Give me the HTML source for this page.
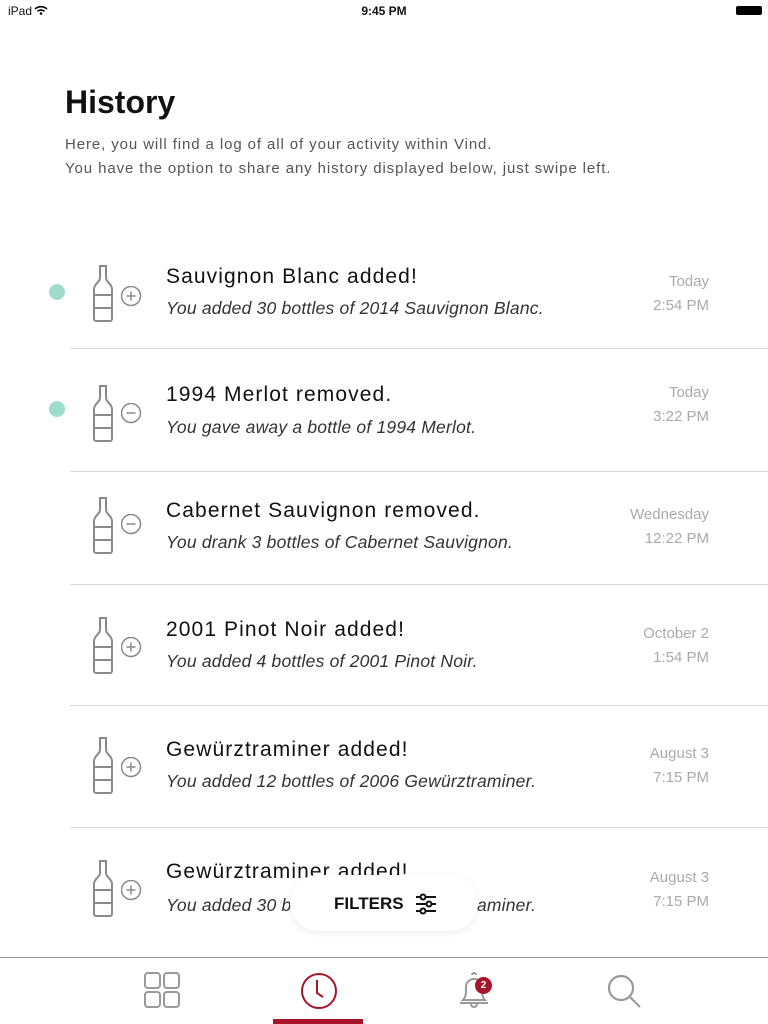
<!DOCTYPE html>
<html><head><meta charset="utf-8"><style>
*{margin:0;padding:0;box-sizing:border-box}
body{width:768px;height:1024px;position:relative;background:#fff;font-family:"Liberation Sans",sans-serif;overflow:hidden;color:#111}
.a{position:absolute;white-space:nowrap}
.t{font-size:21px;letter-spacing:1.1px;color:#111;left:166px}
.s{font-size:17.5px;letter-spacing:0.2px;font-style:italic;color:#333;left:166px}
.d{font-size:15px;color:#aaa;right:59px;text-align:right}
.sep{position:absolute;left:70px;right:0;height:1px;background:#d6d6d6}
.dot{position:absolute;left:49px;width:16px;height:16px;border-radius:50%;background:#9fdccb}
</style></head><body>
<div class="a" style="left:8px;top:4px;font-size:12px">iPad</div>
<svg class="a" style="left:34px;top:5px" width="14" height="10" viewBox="0 0 14 10"><path d="M1 4a9 9 0 0 1 12 0M3.5 6.3a5.5 5.5 0 0 1 7 0" stroke="#000" stroke-width="1.6" fill="none"/><circle cx="7" cy="8.5" r="1.3"/></svg>
<div class="a" style="left:0;width:768px;text-align:center;top:4px;font-size:12px;font-weight:bold">9:45 PM</div>
<div class="a" style="left:736px;top:6px;width:26px;height:9px;background:#000;border-radius:2px"></div>

<div class="a" style="left:65px;top:84px;font-size:32px;font-weight:bold">History</div>
<div class="a" style="left:65px;top:133px;font-size:15px;letter-spacing:0.9px;color:#555;line-height:24px">Here, you will find a log of all of your activity within Vind.<br>You have the option to share any history displayed below, just swipe left.</div>

<svg width="0" height="0" style="position:absolute"><defs>
<g id="b" fill="none" stroke="#8a8a8a" stroke-width="2"><path d="M7 1h6v12c0 4 6 6 6 11v30a2 2 0 0 1-2 2H3a2 2 0 0 1-2-2V24c0-5 6-7 6-11z"/><path d="M1 30h18M1 43h18"/></g>
<g id="p" fill="none" stroke="#8a8a8a" stroke-width="1.5"><circle cx="10" cy="10" r="9.5"/><path d="M5.5 10h9M10 5.5v9"/></g>
<g id="m" fill="none" stroke="#8a8a8a" stroke-width="1.5"><circle cx="10" cy="10" r="9.5"/><path d="M5.5 10h9"/></g>
</defs></svg>

<div class="dot" style="top:284px"></div>
<svg class="a" style="left:93px;top:265px" width="21" height="58"><use href="#b"/></svg>
<svg class="a" style="left:121px;top:286px" width="21" height="21"><use href="#p"/></svg>
<div class="a t" style="top:265px">Sauvignon Blanc added!</div>
<div class="a s" style="top:298px">You added 30 bottles of 2014 Sauvignon Blanc.</div>
<div class="a d" style="top:270px;line-height:24px">Today<br>2:54 PM</div>
<div class="sep" style="top:348px"></div>

<div class="dot" style="top:401px"></div>
<svg class="a" style="left:93px;top:385px" width="21" height="58"><use href="#b"/></svg>
<svg class="a" style="left:121px;top:403px" width="21" height="21"><use href="#m"/></svg>
<div class="a t" style="top:383px">1994 Merlot removed.</div>
<div class="a s" style="top:417px">You gave away a bottle of 1994 Merlot.</div>
<div class="a d" style="top:381px;line-height:24px">Today<br>3:22 PM</div>
<div class="sep" style="top:471px"></div>

<svg class="a" style="left:93px;top:497px" width="21" height="58"><use href="#b"/></svg>
<svg class="a" style="left:121px;top:514px" width="21" height="21"><use href="#m"/></svg>
<div class="a t" style="top:499px">Cabernet Sauvignon removed.</div>
<div class="a s" style="top:532px">You drank 3 bottles of Cabernet Sauvignon.</div>
<div class="a d" style="top:503px;line-height:24px">Wednesday<br>12:22 PM</div>
<div class="sep" style="top:584px"></div>

<svg class="a" style="left:93px;top:617px" width="21" height="58"><use href="#b"/></svg>
<svg class="a" style="left:121px;top:637px" width="21" height="21"><use href="#p"/></svg>
<div class="a t" style="top:618px">2001 Pinot Noir added!</div>
<div class="a s" style="top:651px">You added 4 bottles of 2001 Pinot Noir.</div>
<div class="a d" style="top:622px;line-height:24px">October 2<br>1:54 PM</div>
<div class="sep" style="top:705px"></div>

<svg class="a" style="left:93px;top:737px" width="21" height="58"><use href="#b"/></svg>
<svg class="a" style="left:121px;top:757px" width="21" height="21"><use href="#p"/></svg>
<div class="a t" style="top:738px">Gewürztraminer added!</div>
<div class="a s" style="top:771px">You added 12 bottles of 2006 Gewürztraminer.</div>
<div class="a d" style="top:742px;line-height:24px">August 3<br>7:15 PM</div>
<div class="sep" style="top:827px"></div>

<svg class="a" style="left:93px;top:860px" width="21" height="58"><use href="#b"/></svg>
<svg class="a" style="left:121px;top:880px" width="21" height="21"><use href="#p"/></svg>
<div class="a t" style="top:860px">Gewürztraminer added!</div>
<div class="a s" style="top:895px">You added 30 bottles of 2006 Gewürztraminer.</div>
<div class="a d" style="top:866px;line-height:24px">August 3<br>7:15 PM</div>

<div class="a" style="left:290px;top:875px;width:188px;height:56px;border-radius:28px;background:#fff;box-shadow:0 2px 8px rgba(0,0,0,.08)"></div>
<div class="a" style="left:334px;top:894px;font-size:17px;font-weight:bold">FILTERS</div>
<svg class="a" style="left:415px;top:893px" width="22" height="22" viewBox="0 0 22 22" fill="none" stroke="#111" stroke-width="2"><path d="M1 4h20M1 11h20M1 18h20"/><circle cx="8" cy="4" r="2.5" fill="#fff"/><circle cx="14" cy="11" r="2.5" fill="#fff"/><circle cx="8" cy="18" r="2.5" fill="#fff"/></svg>

<div class="a" style="left:0;top:957px;width:768px;height:1px;background:#999"></div>
<svg class="a" style="left:144px;top:972px" width="36" height="36" fill="none" stroke="#999" stroke-width="2"><rect x="1" y="1" width="15" height="15" rx="3"/><rect x="20" y="1" width="15" height="15" rx="3"/><rect x="1" y="20" width="15" height="15" rx="3"/><rect x="20" y="20" width="15" height="15" rx="3"/></svg>
<svg class="a" style="left:300px;top:972px" width="38" height="38" fill="none" stroke="#a8142a" stroke-width="2"><circle cx="19" cy="19" r="17"/><path d="M17 8v13l6 4"/></svg>
<div class="a" style="left:273px;top:1019px;width:90px;height:5px;background:#a8142a"></div>
<svg class="a" style="left:457px;top:972px" width="36" height="38" fill="none" stroke="#999" stroke-width="2"><path d="M15 3a2 2 0 0 1 4 0M6 28c3-3 3-6 3-13a8 8 0 0 1 16 0c0 7 0 10 3 13zM3 31h28M14 32a3 3 0 0 0 6 0"/></svg>
<div class="a" style="left:475px;top:977px;width:17px;height:17px;border-radius:50%;background:#a8142a;color:#fff;font-size:10px;font-weight:bold;text-align:center;line-height:17px">2</div>
<svg class="a" style="left:607px;top:974px" width="36" height="36" fill="none" stroke="#999" stroke-width="2.2"><circle cx="14" cy="14" r="12"/><path d="M23 23l10 10"/></svg>
</body></html>
